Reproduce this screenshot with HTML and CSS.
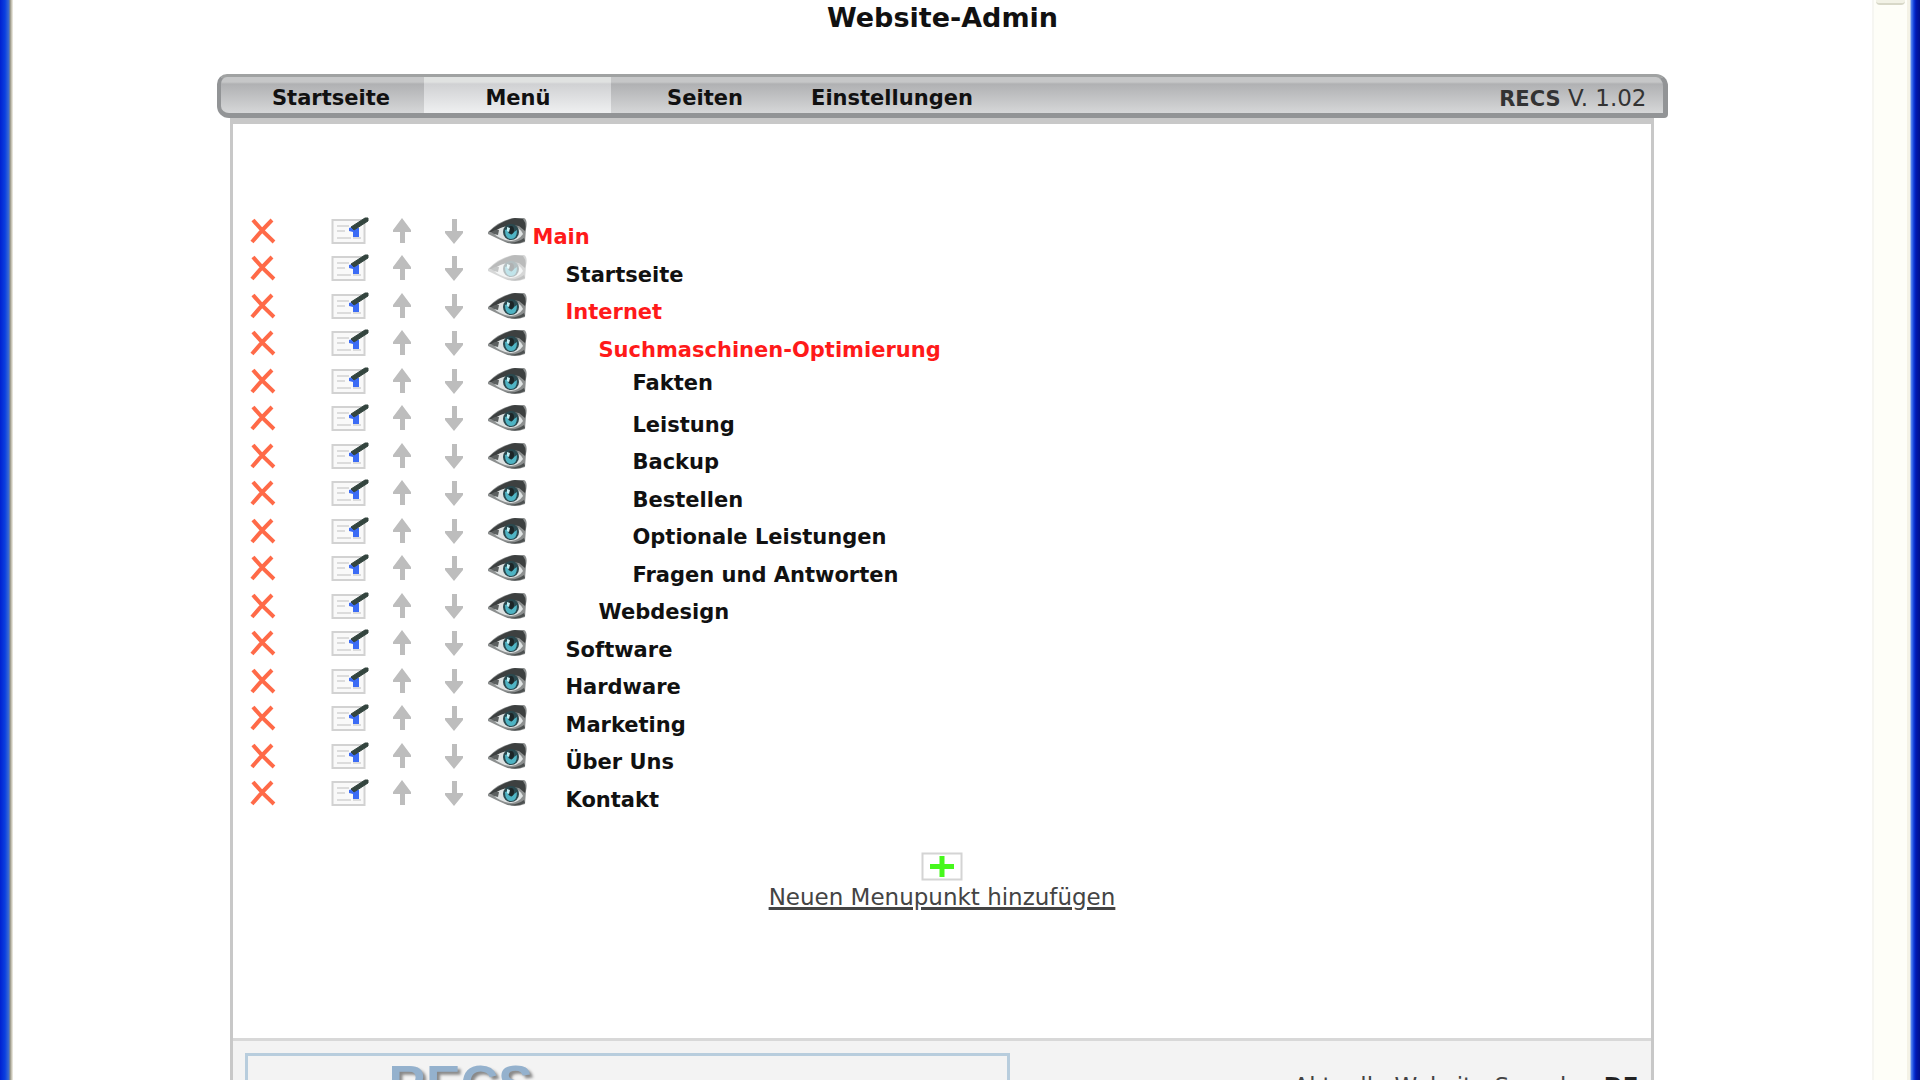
FILE: index.html
```html
<!DOCTYPE html>
<html lang="de">
<head>
    <meta charset="UTF-8">
    <meta name="viewport" content="width=device-width, initial-scale=1.0">
    <title>Website-Admin</title>
    <link rel="stylesheet" href="styles.css">
</head>
<body>
    <!-- Icons -->
    <svg class="sprite" aria-hidden="true">
        <symbol id="icon-delete" viewBox="0 0 26 26">
            <path d="M3 2 Q12 13 24 24 M22 2 Q11 13 2 24" fill="none" stroke="#ff6a48" stroke-width="4"/>
        </symbol>
        <symbol id="icon-edit" viewBox="0 0 38 28">
            <rect x="1.5" y="3" width="32" height="23" fill="#f9f9f9" stroke="#d2d2d2" stroke-width="2"/>
            <path d="M6 9h12M6 14h8M6 21h14M22 21h8" stroke="#dcdcdc" stroke-width="2"/>
            <path d="M18 11l6-2 4 2V20H22V15L18 14z" fill="#3c6cf5"/>
            <path d="M20 10L34 1H37V4L23 13z" fill="#34453f" stroke="#34453f"/>
        </symbol>
        <symbol id="icon-up" viewBox="0 0 20 26">
            <path d="M10 0L19 12V14H13V25H8V14H1V12z" fill="#bdbdbd"/>
        </symbol>
        <symbol id="icon-down" viewBox="0 0 20 26">
            <path d="M8 1H13V13H19V15L10 26L1 15V13H8z" fill="#bdbdbd"/>
        </symbol>
        <symbol id="icon-eye" viewBox="0 0 40 28">
            <path d="M0 15Q12 3 26 1L36 1Q40 3 38 12L37 25Q27 29 17 25Q8 21 0 17z" fill="#8c8f8f"/>
            <path d="M1 15Q12 4 27 1L35 2Q39 7 37 14L31 9Q18 6 7 15z" fill="#3d4040"/>
            <path d="M5 16Q12 9 23 9Q32 10 35 17Q31 23 23 24Q12 23 5 16z" fill="#dfe3e3"/>
            <path d="M3 15Q8 12 11 13L10 18Q6 18 3 15z" fill="#5c6060"/>
            <circle cx="23" cy="15" r="8" fill="#2b4a50"/>
            <path d="M17 13Q17 22 23 22Q29 22 29 13L26 15L23 18L20 12z" fill="#4fb4c4"/>
            <ellipse cx="23" cy="13" rx="3" ry="4" fill="#1c2628"/>
            <path d="M19 10l3 1-1 4-2-1z" fill="#c4eef2"/>
            <path d="M16 24Q26 28 36 21L37 24Q27 29 16 24z" fill="#4d5151"/>
        </symbol>
        <symbol id="icon-add" viewBox="0 0 42 30">
            <rect x="1.5" y="2.5" width="39" height="26" fill="#fff" stroke="#d4d4d4" stroke-width="2"/>
            <path d="M9 15.500H33M21 5V26" fill="none" stroke="#46f81c" stroke-width="5"/>
        </symbol>
    </svg>

    <div class="window">
        <main class="page">
            <h1>Website-Admin</h1>

            <div class="container">
                <nav class="navbar">
                    <a href="#start">Startseite</a>
                    <a href="#menu" class="active">Menü</a>
                    <a href="#seiten">Seiten</a>
                    <a href="#einstellungen">Einstellungen</a>
                    <span class="version"><b>RECS</b> V. 1.02</span>
                </nav>

                <div class="content">
                    <table class="menu-table">
                        <tbody id="menu-rows"></tbody>
                    </table>

                    <a href="#neu" class="add">
                        <svg class="add-icon" aria-hidden="true"><use href="#icon-add"/></svg>
                        <span>Neuen Menupunkt hinzufügen</span>
                    </a>

                    <footer class="footer">
                        <div class="logo-box"><span class="logo">RECS</span></div>
                        <p>Aktuelle Website-Sprache: <b>DE</b></p>
                    </footer>
                </div>
            </div>
        </main>
        <div class="scrollbar"><div class="thumb"></div></div>
    </div>

    <script src="menu.js"></script>
</body>
</html>
```
FILE: styles.css
```css
* {
    box-sizing: border-box;
}
body {
    margin: 0;
    height: 100vh;
    overflow: hidden;
    background: white;
    color: #111;
    font-family: "DejaVu Sans", Verdana, sans-serif;
    font-size: 21px;
}
a {
    color: inherit;
    text-decoration: none;
}
.sprite {
    display: none;
}

/* Window frame */
.window {
    display: flex;
    height: 100vh;
    overflow: hidden;
}
.window::before {
    content: "";
    flex: 0 0 13px;
    background: linear-gradient(to right, #0020d0 0, #0a3fe0 5px, #3f6fd0 9px, #8c8c80 10px, #b8b4a4 11px, #f4f2ea 13px);
}
.window::after {
    content: "";
    flex: 0 0 13px;
    background: linear-gradient(to right, #f4f2e6 0, #f4f2e6 3px, #5c8cf0 4px, #0a38d8 7px, #0018b0 9px, #00108c 13px);
}
.page {
    flex: 1;
}
.scrollbar {
    flex: 0 0 35px;
    padding: 0 2px;
    background: #fefef8;
    border-left: 2px solid #f6f6f2;
}
.thumb {
    height: 5px;
    background: #f2f2e6;
    border-bottom: 2px solid #d8d8c8;
    border-radius: 0 0 4px 4px;
}

h1 {
    margin: 0 0 38px;
    font-size: 27px;
    line-height: 36px;
    text-align: center;
}
.container {
    width: 78%;
    margin: 0 auto;
}

/* Navigation */
.navbar {
    display: flex;
    height: 44px;
    padding-left: 16px;
    border: solid #929496;
    border-width: 3px 5px 5px 4px;
    border-top-color: #a0a2a2;
    border-radius: 10px 12px 4px 12px;
    background: linear-gradient(#c6c7c8 0, #c6c7c8 5px, #b0b1b3 7px, #d6d7d8 100%);
    line-height: 42px;
}
.navbar a {
    flex: 0 0 187px;
    font-weight: bold;
    text-align: center;
}
.navbar a.active {
    background: linear-gradient(#e0e2e1 0, #e0e2e1 5px, #d0d1d3 7px, #eff0f1 100%);
}
.version {
    margin-left: auto;
    padding-right: 16px;
    color: #333;
    font-size: 23px;
}
.version b {
    font-size: 21px;
}

/* Content */
.content {
    margin: 0 14px 0 13px;
    border: 3px solid #c8c8c8;
    border-top-width: 6px;
    padding-top: 88px;
}
.menu-table {
    height: 600px;
    margin-left: 13px;
    border-collapse: collapse;
}
.menu-table td {
    padding: 0;
    vertical-align: top;
    line-height: 24px;
}
.menu-table .cell-delete {
    width: 81px;
}
.menu-table .cell-edit {
    width: 61px;
}
.menu-table .cell-up {
    width: 52px;
}
.menu-table .cell-down {
    width: 44px;
}
.menu-table .cell-eye {
    width: 48px;
}
.menu-table button {
    display: flex;
    align-items: center;
    height: 37px;
    padding: 0 4px;
    border: none;
    background: none;
    cursor: pointer;
}
.menu-table .name {
    padding-top: 13px;
    font-weight: bold;
}
.menu-table .name.raised {
    padding-top: 9px;
}
.folder {
    color: #ff1a1a;
}
.level-1 {
    margin-left: 33px;
}
.level-2 {
    margin-left: 66px;
}
.level-3 {
    margin-left: 100px;
}
.icon-delete {
    width: 26px;
    height: 26px;
}
.icon-edit {
    width: 38px;
    height: 28px;
}
.icon-up,
.icon-down {
    width: 20px;
    height: 26px;
}
.icon-eye {
    width: 40px;
    height: 28px;
}
.hidden-entry {
    opacity: 0.35;
}
.add {
    display: flex;
    flex-direction: column;
    align-items: center;
    margin-top: 39px;
    color: #444;
    font-size: 23px;
    line-height: 32px;
    text-decoration: underline;
    text-decoration-thickness: 3px;
}
.add-icon {
    width: 42px;
    height: 30px;
}

/* Footer */
.footer {
    display: flex;
    justify-content: space-between;
    height: 160px;
    margin-top: 125px;
    padding: 12px;
    border-top: 3px solid #d8d8d8;
    background: #f3f3f3;
    color: #444;
    font-size: 23px;
}
.logo-box {
    width: 765px;
    padding: 0 140px;
    border: 3px solid #b8cddd;
}
.logo {
    color: #94b1cd;
    font-family: "Liberation Sans", Arial, sans-serif;
    font-size: 52px;
    font-weight: bold;
    line-height: 56px;
    text-shadow: 3px 3px 3px #888;
}
.footer p {
    margin: 20px 0;
}
.footer b {
    color: #222;
}
```
FILE: menu.js
```js
const entries = [
    { name: 'Main', level: 0, folder: true },
    { name: 'Startseite', level: 1, hidden: true },
    { name: 'Internet', level: 1, folder: true },
    { name: 'Suchmaschinen-Optimierung', level: 2, folder: true },
    { name: 'Fakten', level: 3, raised: true },
    { name: 'Leistung', level: 3 },
    { name: 'Backup', level: 3 },
    { name: 'Bestellen', level: 3 },
    { name: 'Optionale Leistungen', level: 3 },
    { name: 'Fragen und Antworten', level: 3 },
    { name: 'Webdesign', level: 2 },
    { name: 'Software', level: 1 },
    { name: 'Hardware', level: 1 },
    { name: 'Marketing', level: 1 },
    { name: 'Über Uns', level: 1 },
    { name: 'Kontakt', level: 1 }
];

function iconCell(icon, label, extra = '') {
    return `<td class="cell-${icon}">
        <button type="button" aria-label="${label}">
            <svg class="icon-${icon} ${extra}"><use href="#icon-${icon}"/></svg>
        </button>
    </td>`;
}

document.getElementById('menu-rows').innerHTML = entries.map(e => `<tr>
    ${iconCell('delete', e.name + ' löschen')}
    ${iconCell('edit', e.name + ' bearbeiten')}
    ${iconCell('up', e.name + ' nach oben')}
    ${iconCell('down', e.name + ' nach unten')}
    ${iconCell('eye', e.name + ' ein-/ausblenden', e.hidden ? 'hidden-entry' : '')}
    <td class="name ${e.raised ? 'raised' : ''}">
        <a href="#" class="level-${e.level} ${e.folder ? 'folder' : ''}">${e.name}</a>
    </td>
</tr>`).join('');
```
